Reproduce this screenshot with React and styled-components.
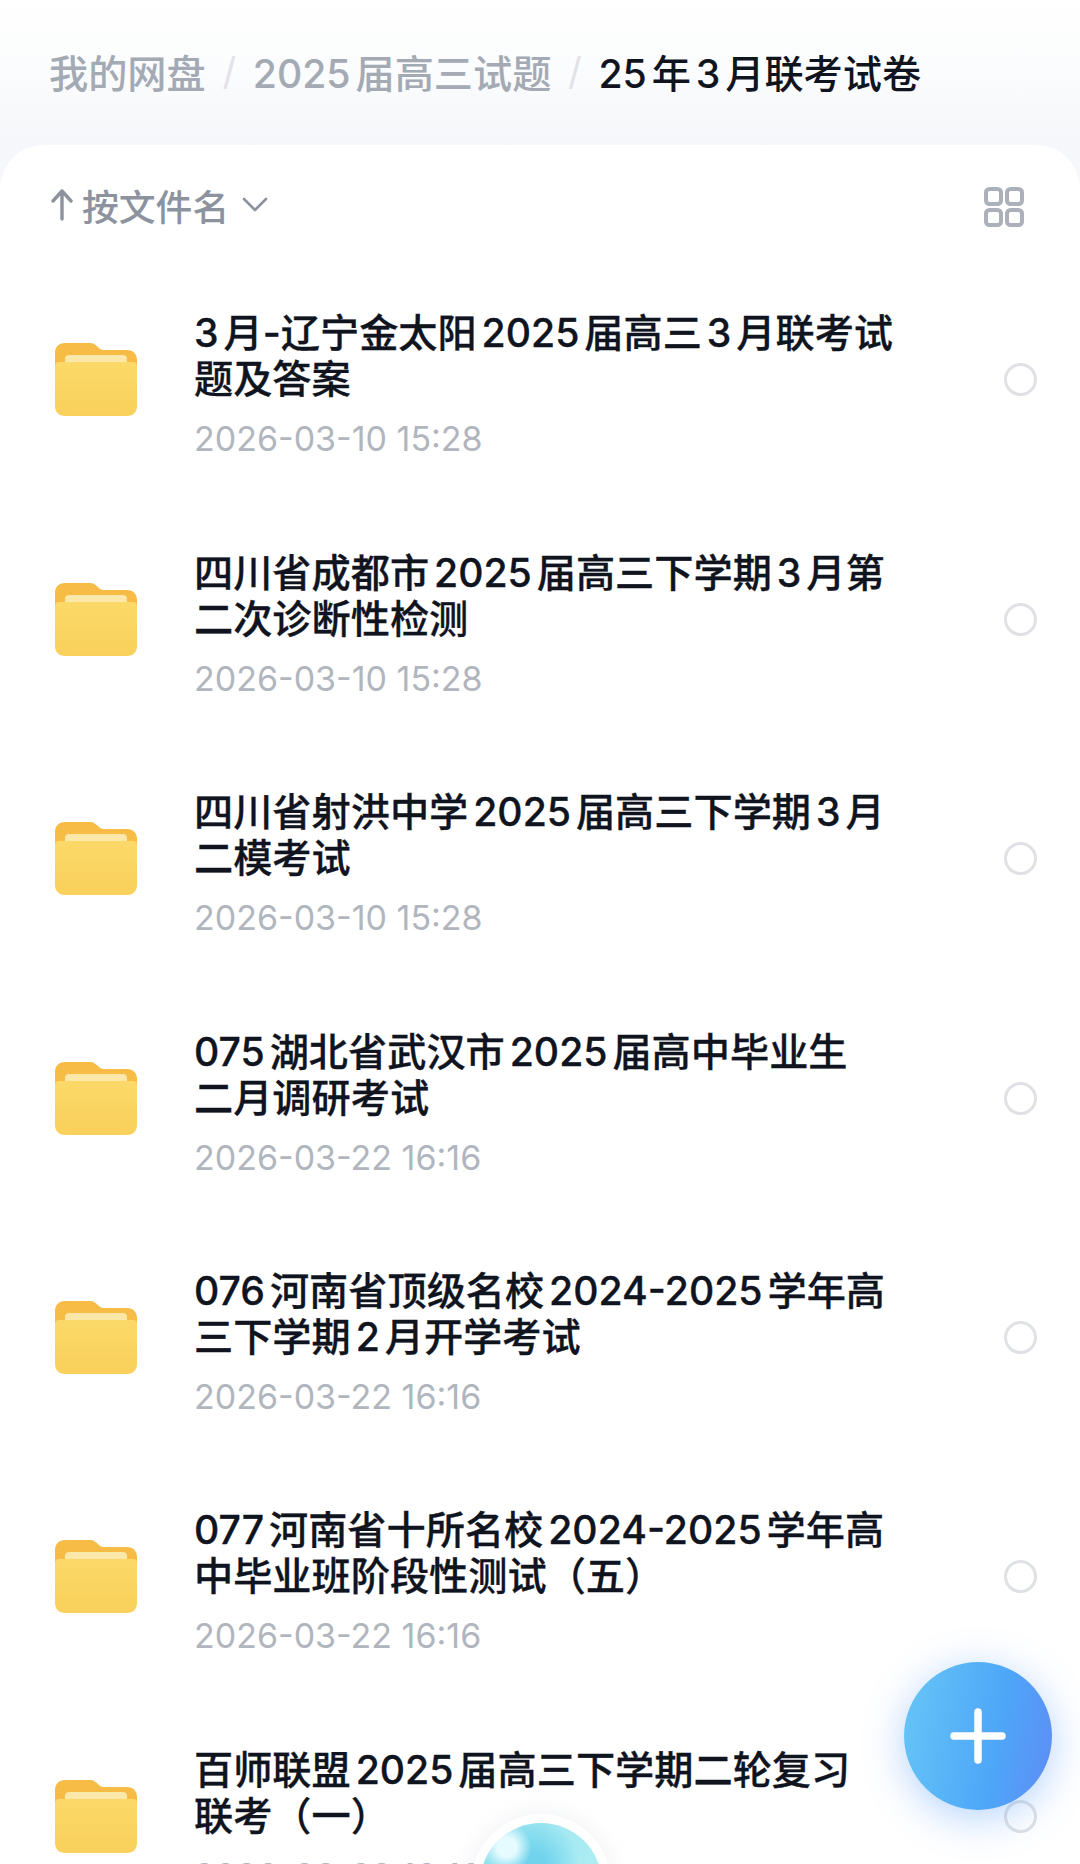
import React from "react";
import styled, { createGlobalStyle } from "styled-components";

const Global = createGlobalStyle`
  html, body { margin: 0; padding: 0; background: #fff; }
  #root { width: 1080px; height: 1864px; overflow: hidden; }
  * { box-sizing: border-box; }
`;

const Page = styled.div`
  position: relative;
  width: 1080px;
  height: 1864px;
  overflow: hidden;
  background: linear-gradient(180deg, #ffffff 0%, #fbfcfd 70px, #f5f7fa 145px);
  font-family: Inter, "Noto Sans CJK SC", sans-serif;
  text-autospace: normal;
`;

const Breadcrumb = styled.nav`
  display: flex;
  align-items: center;
  height: 148px;
  padding: 0 0 7px 49px;
  font-size: 39.2px;
  font-weight: 500;
  color: #a4aab4;
  white-space: nowrap;
`;

const Crumb = styled.span`
  color: ${(p) => (p.$current ? "#10141f" : "#a4aab4")};
`;

const Slash = styled.span`
  width: 47px;
  text-align: center;
  font-weight: 400;
  font-size: 38px;
  color: #e1e3e8;
`;

const Card = styled.main`
  background: #fff;
  border-radius: 44px 44px 0 0;
  margin-top: -3px;
`;

const Toolbar = styled.div`
  display: flex;
  align-items: center;
  justify-content: space-between;
  height: 115px;
  padding: 6px 56px 0 51px;
`;

const SortButton = styled.div`
  display: flex;
  align-items: center;
  color: #8d939e;
  font-size: 36.8px;
  font-weight: 500;
  margin-top: -2px;
`;

const SortLabel = styled.span`
  margin: 0 13px 0 9px;
`;

const GridWrap = styled.div`
  display: flex;
  margin-top: 2px;
`;

const FileRow = styled.div`
  display: flex;
  align-items: center;
  height: 239.45px;
  padding: 0 43px 0 55px;
`;

const FolderSlot = styled.div`
  flex: 0 0 139px;
  display: flex;
  align-items: center;
`;

const TextBlock = styled.div`
  flex: 1;
  margin-bottom: -8px;
`;

const Title = styled.div`
  font-size: 39.2px;
  line-height: 46px;
  font-weight: 500;
  color: #10141f;
  -webkit-text-stroke: 0.3px #10141f;
`;

const TitleLine = styled.span`
  display: block;
  white-space: nowrap;
`;

const DateText = styled.div`
  margin-top: 19px;
  font-size: 34px;
  line-height: 36px;
  color: #b1b6be;
`;

const Radio = styled.div`
  flex: none;
  width: 33px;
  height: 33px;
  border-radius: 50%;
  border: 3px solid #dfe1e5;
  background: #fff;
`;

const Fab = styled.div`
  position: absolute;
  left: 904px;
  top: 1662px;
  width: 148px;
  height: 148px;
  border-radius: 50%;
  display: flex;
  align-items: center;
  justify-content: center;
  background: linear-gradient(100deg, #68c6f7 0%, #4ea6f8 62%, #5f8cf5 100%);
  box-shadow: 0 8px 40px rgba(78, 150, 248, 0.42);
`;

const Bubble = styled.div`
  position: absolute;
  left: 480px;
  top: 1823px;
  width: 122px;
  height: 122px;
  border-radius: 50%;
  background:
    radial-gradient(circle at 22% 20%, #e6fbff 0 7%, rgba(255, 255, 255, 0) 18%),
    radial-gradient(circle at 42% 35%, #72d4ec 0 14%, rgba(114, 212, 236, 0) 45%),
    linear-gradient(110deg, #90e0f0 0%, #b6f1f3 100%);
  box-shadow: 0 0 0 9px #fff, 0 0 18px 14px rgba(214, 220, 226, 0.28);
`;

const FolderIcon = () => (
  <svg width="82" height="73" viewBox="0 0 82 73">
    <defs>
      <linearGradient id="folderFront" x1="0" y1="0" x2="0" y2="1">
        <stop offset="0" stopColor="#fbd968" />
        <stop offset="1" stopColor="#f9d05b" />
      </linearGradient>
    </defs>
    <path
      d="M0 10C0 4 4 0 10 0H35C39 0 41 2 44 5C46 7 48 7 50 7H72C78 7 82 11 82 17V30H0Z"
      fill="#f6bc46"
    />
    <path d="M10 19V16C10 13.5 11.5 12 14 12H68C70.5 12 72 13.5 72 16V19Z" fill="#fbe8a8" />
    <path
      d="M0 23C0 20 2 19 4 19H78C80 19 82 20 82 23V63C82 69 78 73 72 73H10C4 73 0 69 0 63Z"
      fill="url(#folderFront)"
    />
  </svg>
);

const GridIcon = () => (
  <svg width="40" height="40" viewBox="0 0 40 40" fill="none" stroke="#abb0ba" strokeWidth="4">
    <rect x="2" y="2" width="15" height="15" rx="3.5" />
    <rect x="23" y="2" width="15" height="15" rx="3.5" />
    <rect x="2" y="23" width="15" height="15" rx="3.5" />
    <rect x="23" y="23" width="15" height="15" rx="3.5" />
  </svg>
);

const ArrowUp = () => (
  <svg width="22" height="32" viewBox="0 0 22 32" fill="none" stroke="#8d939e" strokeWidth="3.4" strokeLinecap="round" strokeLinejoin="round">
    <path d="M11 2V30M2 12L11 2L20 12" />
  </svg>
);

const Chevron = () => (
  <svg width="26" height="15" viewBox="0 0 26 15" fill="none" stroke="#8d939e" strokeWidth="2.6" strokeLinecap="round" strokeLinejoin="round">
    <path d="M2 2L13 13L24 2" />
  </svg>
);

const PlusIcon = () => (
  <svg width="56" height="56" viewBox="0 0 56 56" fill="none" stroke="#fff" strokeWidth="7.5" strokeLinecap="round">
    <path d="M28 4V52M4 28H52" />
  </svg>
);

const files = [
  { lines: ["3月-辽宁金太阳2025届高三3月联考试", "题及答案"], date: "2026-03-10 15:28" },
  { lines: ["四川省成都市2025届高三下学期3月第", "二次诊断性检测"], date: "2026-03-10 15:28" },
  { lines: ["四川省射洪中学2025届高三下学期3月", "二模考试"], date: "2026-03-10 15:28" },
  { lines: ["075湖北省武汉市2025届高中毕业生", "二月调研考试"], date: "2026-03-22 16:16" },
  { lines: ["076河南省顶级名校2024-2025学年高", "三下学期2月开学考试"], date: "2026-03-22 16:16" },
  { lines: ["077河南省十所名校2024-2025学年高", "中毕业班阶段性测试（五）"], date: "2026-03-22 16:16" },
  { lines: ["百师联盟2025届高三下学期二轮复习", "联考（一）"], date: "2026-03-22 16:16" },
];

export default function App() {
  return (
    <Page>
      <Global />
      <Breadcrumb>
        <Crumb>我的网盘</Crumb>
        <Slash>/</Slash>
        <Crumb>2025届高三试题</Crumb>
        <Slash>/</Slash>
        <Crumb $current>25年3月联考试卷</Crumb>
      </Breadcrumb>
      <Card>
        <Toolbar>
          <SortButton>
            <ArrowUp />
            <SortLabel>按文件名</SortLabel>
            <Chevron />
          </SortButton>
          <GridWrap>
            <GridIcon />
          </GridWrap>
        </Toolbar>
        {files.map((f, i) => (
          <FileRow key={i}>
            <FolderSlot>
              <FolderIcon />
            </FolderSlot>
            <TextBlock>
              <Title>
                {f.lines.map((l) => (
                  <TitleLine key={l}>{l}</TitleLine>
                ))}
              </Title>
              <DateText>{f.date}</DateText>
            </TextBlock>
            <Radio />
          </FileRow>
        ))}
      </Card>
      <Bubble />
      <Fab>
        <PlusIcon />
      </Fab>
    </Page>
  );
}
